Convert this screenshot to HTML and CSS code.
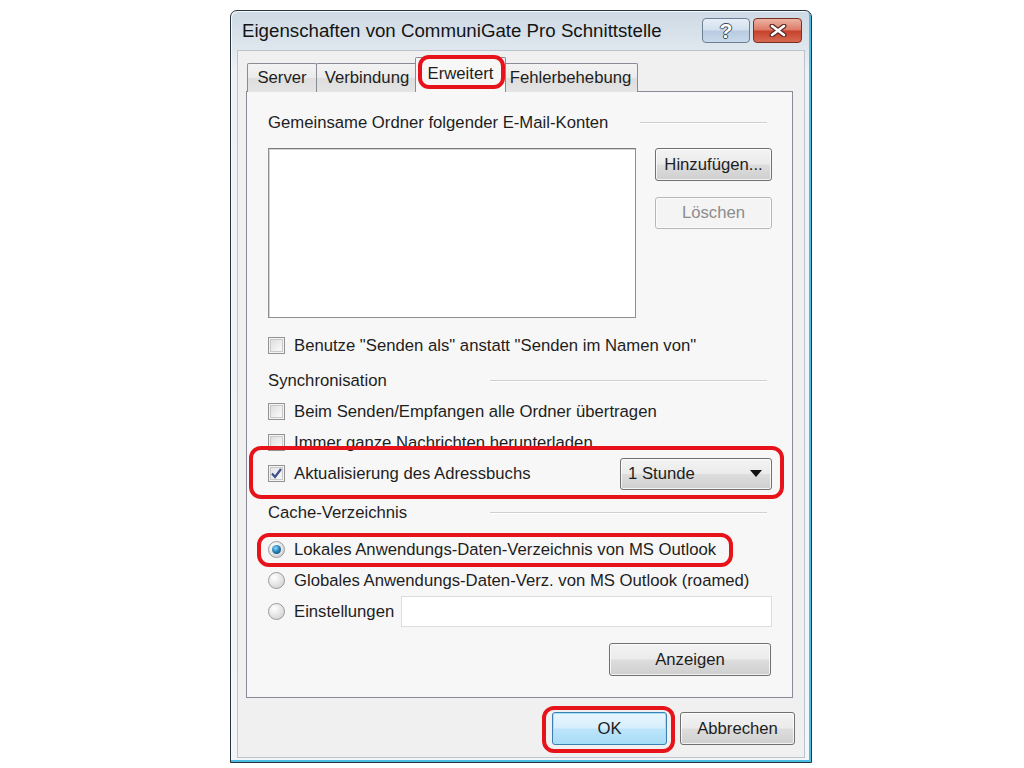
FILE: index.html
```html
<!DOCTYPE html>
<html lang="de">
<head>
    <meta charset="UTF-8">
    <meta name="viewport" content="width=device-width, initial-scale=1">
    <title>Eigenschaften von CommuniGate Pro Schnittstelle</title>
    <link rel="stylesheet" href="styles.css">
</head>
<body>
    <div class="window">
        <div class="titlebar">
            <span class="title">Eigenschaften von CommuniGate Pro Schnittstelle</span>
            <div class="cap-buttons">
                <div class="cap help">?</div>
                <div class="cap close">
                    <svg width="20" height="13" viewBox="0 0 20 13">
                        <path d="M4 2 L16 11 M16 2 L4 11" stroke="#5a2a22" stroke-width="5" stroke-linecap="round"/>
                        <path d="M4 2 L16 11 M16 2 L4 11" stroke="#fff" stroke-width="2.6" stroke-linecap="round"/>
                    </svg>
                </div>
            </div>
        </div>

        <div class="client">
            <div class="tabs">
                <div class="tab tab-server">Server</div>
                <div class="tab tab-verbindung">Verbindung</div>
                <div class="tab tab-erweitert active">Erweitert</div>
                <div class="tab tab-fehler">Fehlerbehebung</div>
            </div>

            <div class="panel">
                <div class="row group">
                    <span class="group-label wide">Gemeinsame Ordner folgender E-Mail-Konten</span>
                    <span class="line"></span>
                </div>

                <div class="list-row">
                    <div class="listbox"></div>
                    <div class="list-buttons">
                        <button class="btn">Hinzufügen...</button>
                        <button class="btn" disabled>Löschen</button>
                    </div>
                </div>

                <div class="row check-first">
                    <span class="check"></span>
                    <span>Benutze "Senden als" anstatt "Senden im Namen von"</span>
                </div>

                <div class="row group group-sync">
                    <span class="group-label">Synchronisation</span>
                    <span class="line"></span>
                </div>
                <div class="row">
                    <span class="check"></span>
                    <span>Beim Senden/Empfangen alle Ordner übertragen</span>
                </div>
                <div class="row">
                    <span class="check"></span>
                    <span>Immer ganze Nachrichten herunterladen</span>
                </div>
                <div class="row">
                    <span class="check on">
                        <svg width="15" height="15" viewBox="0 0 15 15">
                            <path d="M3 7.5 L6 11 L12 3" fill="none" stroke="#3d4f8c" stroke-width="2.2"/>
                        </svg>
                    </span>
                    <span>Aktualisierung des Adressbuchs</span>
                    <div class="combo">
                        <span>1 Stunde</span>
                        <svg width="12" height="7" viewBox="0 0 12 7"><path d="M0 0 H12 L6 7 Z" fill="#111"/></svg>
                    </div>
                </div>

                <div class="row group group-cache">
                    <span class="group-label">Cache-Verzeichnis</span>
                    <span class="line"></span>
                </div>
                <div class="row radios">
                    <span class="radio on"></span>
                    <span>Lokales Anwendungs-Daten-Verzeichnis von MS Outlook</span>
                </div>
                <div class="row">
                    <span class="radio"></span>
                    <span>Globales Anwendungs-Daten-Verz. von MS Outlook (roamed)</span>
                </div>
                <div class="row">
                    <span class="radio"></span>
                    <span>Einstellungen</span>
                    <div class="textbox"></div>
                </div>

                <div class="show-row">
                    <button class="btn btn-show">Anzeigen</button>
                </div>
            </div>

            <div class="footer">
                <button class="btn default">OK</button>
                <button class="btn">Abbrechen</button>
            </div>
        </div>

        <!-- red annotation marks -->
        <span class="mark mark-tab"></span>
        <span class="mark mark-sync"></span>
        <span class="mark mark-local"></span>
        <span class="mark mark-ok"></span>
    </div>
</body>
</html>
```

FILE: styles.css
```css
* {
    margin: 0;
    padding: 0;
    box-sizing: border-box;
}

html {
    font-family: "Liberation Sans", Arial, sans-serif;
    font-size: 16.7px;
}

body {
    background-color: #fff;
    color: #1e1e1e;
    overflow: hidden;
}

.window {
    position: relative;
    display: flex;
    flex-direction: column;
    width: 582px;
    height: 753px;
    margin: 10px 0 0 230px;
    padding: 0 6px 4px 6px;
    border: 1px solid #26323c;
    border-radius: 7px 7px 0 0;
    background: linear-gradient(#cdd9e4, #dfe7ee 38px, #eef2f6 60px, #f3f5f8);
    box-shadow: inset -2px -2px 0 #4bbde4, inset 1px 1px 0 #f8fbfd;
}

.titlebar {
    display: flex;
    align-items: center;
    height: 39px;
    padding: 0 3px 0 5px;
}

.title {
    flex: 1;
    font-size: 18.7px;
    color: #141414;
}

.cap-buttons {
    display: flex;
    gap: 3px;
    align-self: flex-start;
    margin-top: 7px;
}

.cap {
    display: flex;
    align-items: center;
    justify-content: center;
    height: 25px;
    border-radius: 4px;
}

.help {
    width: 48px;
    border: 1px solid #6d7f94;
    background: linear-gradient(#e6eef7, #d3e0ee 48%, #b8cbe0 52%, #c9d9ea);
    color: #fff;
    font-size: 21px;
    font-weight: bold;
    text-shadow: 1px 0 0 #3d4b5c, -1px 0 0 #3d4b5c, 0 1px 0 #3d4b5c, 0 -1px 0 #3d4b5c;
}

.close {
    width: 49px;
    border: 1px solid #7a2f24;
    background: linear-gradient(#ecb3a3, #dc7a66 48%, #c7412c 52%, #d66a52);
}

.client {
    flex: 1;
    padding: 12px 11px 0 8px;
    background-color: #f0f0f0;
    border: 1px solid #b9c4cd;
}

.tabs {
    position: relative;
    z-index: 1;
    display: flex;
    align-items: flex-end;
    height: 29px;
    margin-bottom: -1px;
    padding-left: 2px;
}

.tab {
    display: flex;
    align-items: center;
    justify-content: center;
    height: 29px;
    margin-left: -1px;
    border: 1px solid #898c95;
    border-bottom: none;
    border-radius: 2px 2px 0 0;
    background: linear-gradient(#f3f3f3, #ebebeb 50%, #dedede 51%, #e4e4e4);
}

.tab-server {
    width: 70px;
}

.tab-verbindung {
    width: 102px;
}

.tab-erweitert {
    width: 91px;
}

.tab-fehler {
    width: 135px;
}

.tab.active {
    position: relative;
    z-index: 2;
    height: 35px;
    margin: 0 -2px 0 -3px;
    padding-bottom: 3px;
    background: #f7f7f7;
}

.panel {
    height: 607px;
    padding: 15px 20px 24px 21px;
    border: 1px solid #898c95;
    background-color: #f7f7f7;
}

.row {
    display: flex;
    align-items: center;
    height: 31px;
}

.group-label {
    flex: none;
    width: 222px;
}

.group-label.wide {
    width: 372px;
}

.line {
    flex: 1;
    height: 2px;
    margin-right: 5px;
    border-top: 1px solid #cfcfcf;
    border-bottom: 1px solid #fff;
}

.list-row {
    display: flex;
    margin-top: 10px;
}

.listbox {
    width: 368px;
    height: 170px;
    border: 1px solid #8e8f8f;
    border-top-color: #7b7b7b;
    background-color: #fff;
    box-shadow: inset 1px 1px 0 #d4d4d4;
}

.list-buttons {
    display: flex;
    flex-direction: column;
    gap: 16px;
    margin-left: 19px;
    width: 117px;
}

.btn {
    height: 33px;
    border: 1px solid #707070;
    border-radius: 3px;
    background: linear-gradient(#f3f3f3, #ebebeb 48%, #dddddd 52%, #cfcfcf);
    box-shadow: inset 0 0 0 1px rgba(255, 255, 255, 0.75);
    font: inherit;
    color: #1e1e1e;
}

.btn:disabled {
    height: 32px;
    border-color: #b5b8ba;
    background: #f4f4f4;
    color: #8c8c8c;
}

.btn.default {
    border-color: #3c7fb1;
    background: linear-gradient(#e9f6fd, #d6effc 48%, #bce5fc 52%, #a9dbf6);
    box-shadow: inset 0 0 0 1px #9ee3fb;
}

.check-first {
    margin-top: 12px;
}

.group-sync {
    margin-top: 4px;
}

.group-cache {
    margin-top: 8px;
}

.radios {
    margin-top: 6px;
}

.check {
    display: flex;
    align-items: center;
    justify-content: center;
    flex: none;
    width: 17px;
    height: 17px;
    margin-right: 9px;
    border: 1px solid #939393;
    background: linear-gradient(135deg, #d9d9d9, #f4f4f4 70%, #fbfbfb);
    box-shadow: inset 0 0 0 1px #f3f3f3, inset 0 0 0 2px #c9c9c9;
}

.check.on {
    background: linear-gradient(135deg, #e3e3e3, #fafafa);
}

.radio {
    position: relative;
    flex: none;
    width: 17px;
    height: 17px;
    margin-right: 9px;
    border: 1px solid #9a9a9a;
    border-radius: 50%;
    background: radial-gradient(circle at 35% 30%, #ffffff, #e3e3e3 55%, #c8c8c8);
}

.radio.on::after {
    content: "";
    position: absolute;
    top: 3px;
    left: 3px;
    width: 9px;
    height: 9px;
    border-radius: 50%;
    background: radial-gradient(circle at 40% 35%, #8fdaf8, #1f7db6 50%, #0a3a5e);
}

.combo {
    display: flex;
    align-items: center;
    justify-content: space-between;
    width: 152px;
    height: 32px;
    margin-left: auto;
    padding: 0 9px 0 7px;
    border: 1px solid #707070;
    border-radius: 3px;
    background: linear-gradient(#f3f3f3, #ebebeb 48%, #dddddd 52%, #cfcfcf);
    box-shadow: inset 0 0 0 1px rgba(255, 255, 255, 0.75);
}

.textbox {
    width: 371px;
    height: 31px;
    margin-left: auto;
    border: 1px solid #dcdcdc;
    background-color: #fff;
}

.show-row {
    display: flex;
    justify-content: flex-end;
    margin-top: 16px;
    padding-right: 1px;
}

.btn-show {
    width: 162px;
}

.footer {
    display: flex;
    justify-content: flex-end;
    gap: 13px;
    margin-right: -2px;
    padding-top: 14px;
}

.footer .btn {
    width: 115px;
}

.mark {
    position: absolute;
    z-index: 5;
    border: 4px solid #e6141a;
    border-radius: 12px;
    pointer-events: none;
}

.mark-tab {
    left: 187px;
    top: 44px;
    width: 87px;
    height: 34px;
    border-radius: 11px;
}

.mark-sync {
    left: 18px;
    top: 435px;
    width: 535px;
    height: 53px;
}

.mark-local {
    left: 26px;
    top: 522px;
    width: 476px;
    height: 34px;
}

.mark-ok {
    left: 311px;
    top: 695px;
    width: 133px;
    height: 47px;
}
```
